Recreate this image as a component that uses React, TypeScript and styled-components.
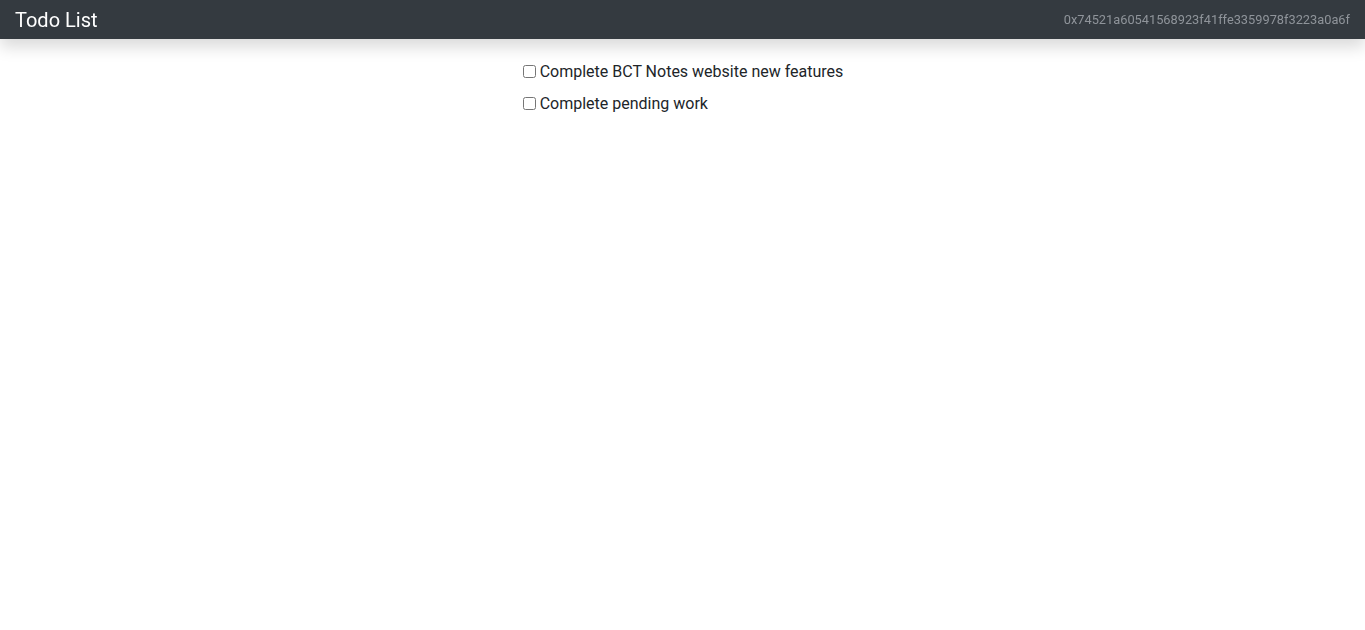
import React, { useState } from 'react'
import styled, { createGlobalStyle } from 'styled-components'

const GlobalStyle = createGlobalStyle`
  html, body {
    margin: 0;
    padding: 0;
    background: #fff;
  }
  body {
    font-family: Roboto, "Liberation Sans", sans-serif;
    font-size: 16px;
    line-height: 1.5;
    color: #212529;
  }
`

const Navbar = styled.nav`
  position: fixed;
  top: 0;
  left: 0;
  right: 0;
  z-index: 10;
  height: 39px;
  background-color: #343a40;
  box-shadow: 0 0.5rem 1rem rgba(0, 0, 0, 0.15);
  display: flex;
  align-items: center;
  justify-content: space-between;
  padding: 0 15px;
`

const Brand = styled.span`
  color: #fff;
  font-size: 20px;
  line-height: 30px;
  white-space: nowrap;
`

const Account = styled.small`
  color: #8f949a;
  font-size: 12.8px;
  white-space: nowrap;
`

const Main = styled.main`
  display: flex;
  justify-content: center;
  padding: 60px 3px 0 0;
`

const TaskList = styled.ul`
  list-style: none;
  margin: 0;
  padding: 0;
`

const Task = styled.li`
  margin-bottom: 8px;
`

const Label = styled.label`
  display: inline-block;
  line-height: 24px;
  cursor: pointer;
`

const Check = styled.input`
  margin: 3px 4px 3px 4px;
  vertical-align: -1px;
`

const initialTasks = [
  { id: 1, content: 'Complete BCT Notes website new features', completed: false },
  { id: 2, content: 'Complete pending work', completed: false },
]

export default function App() {
  const [tasks, setTasks] = useState(initialTasks)

  const toggle = (id: number) => {
    setTasks(tasks.map(t => (t.id === id ? { ...t, completed: !t.completed } : t)))
  }

  return (
    <>
      <GlobalStyle />
      <Navbar>
        <Brand>Todo List</Brand>
        <Account>0x74521a60541568923f41ffe3359978f3223a0a6f</Account>
      </Navbar>
      <Main>
        <TaskList>
          {tasks.map(task => (
            <Task key={task.id}>
              <Label>
                <Check type="checkbox" checked={task.completed} onChange={() => toggle(task.id)} />
                <span>{task.content}</span>
              </Label>
            </Task>
          ))}
        </TaskList>
      </Main>
    </>
  )
}
